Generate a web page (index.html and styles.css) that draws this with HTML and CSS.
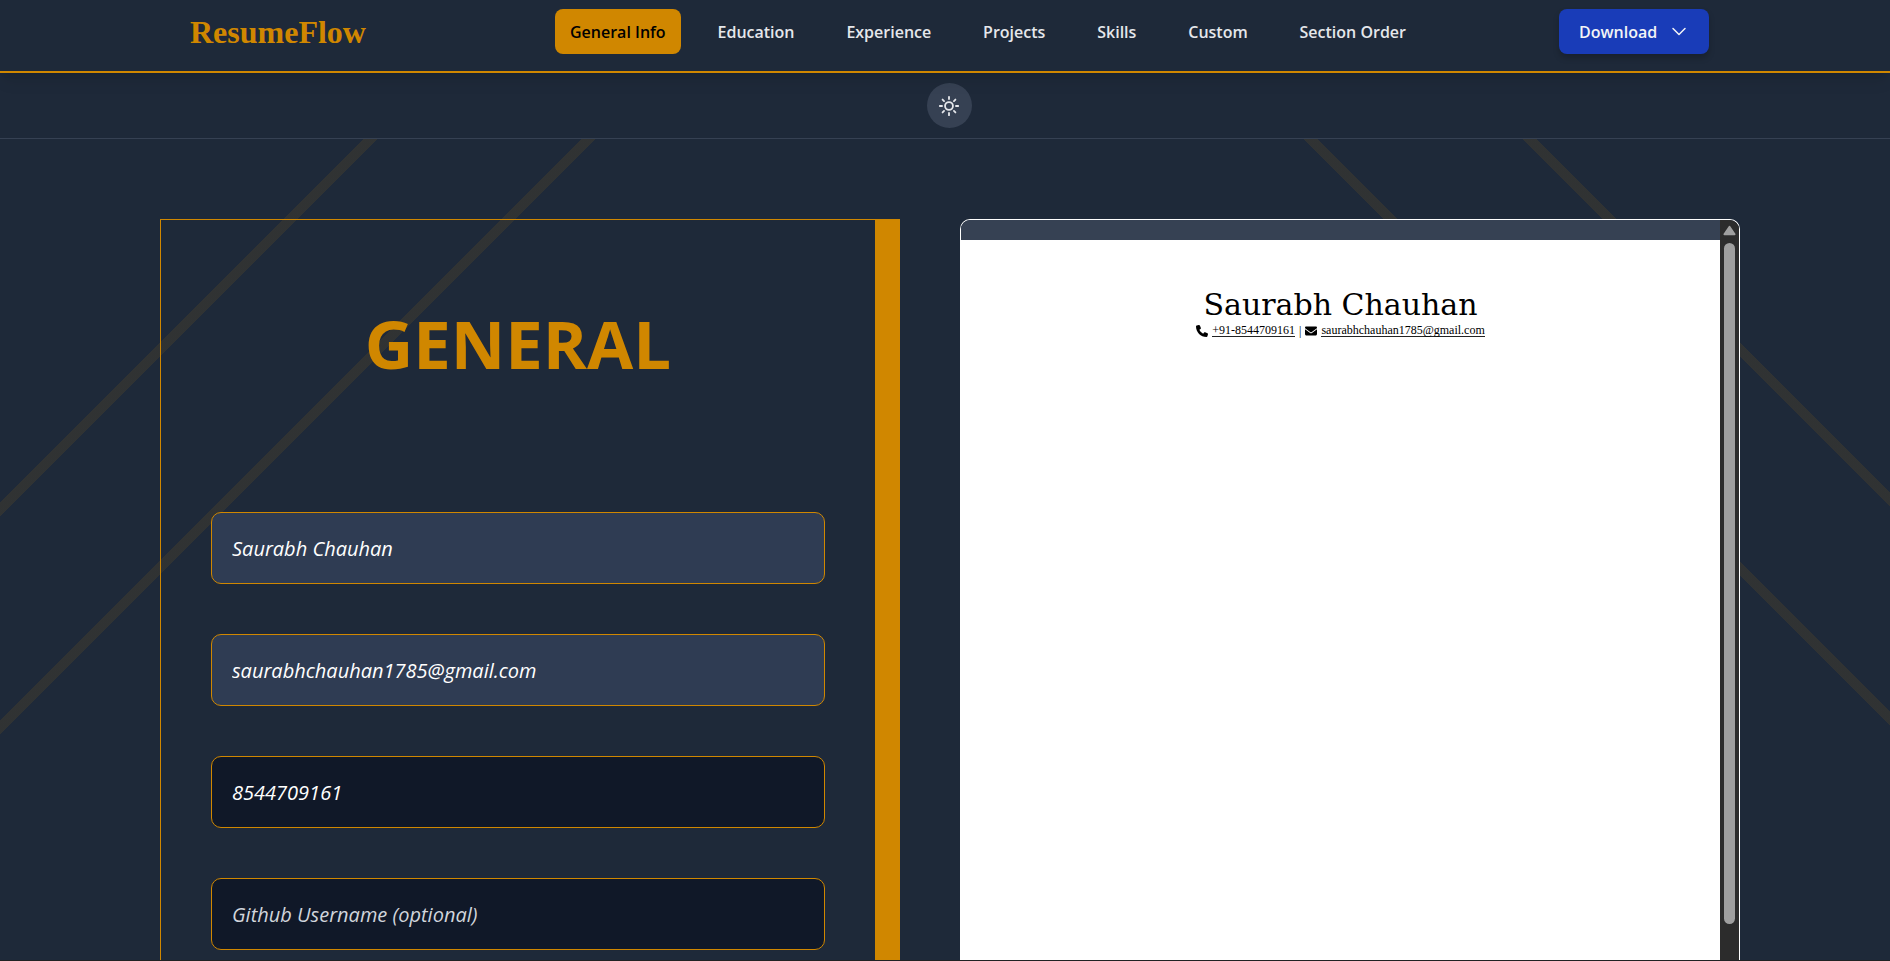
FILE: index.html
```html
<!DOCTYPE html>
<html lang="en">
<head>
<meta charset="utf-8">
<meta name="viewport" content="width=device-width, initial-scale=1">
<title>ResumeFlow</title>
<link rel="stylesheet" href="styles.css">
</head>
<body class="page">
<header class="header">
  <a class="logo" href="#">ResumeFlow</a>
  <nav class="nav">
    <a class="nav-link active" href="#general">General Info</a>
    <a class="nav-link" href="#education">Education</a>
    <a class="nav-link" href="#experience">Experience</a>
    <a class="nav-link" href="#projects">Projects</a>
    <a class="nav-link" href="#skills">Skills</a>
    <a class="nav-link" href="#custom">Custom</a>
    <a class="nav-link" href="#order">Section Order</a>
  </nav>
  <button class="download" type="button">Download
    <svg class="chevron" viewBox="0 0 16 16" aria-hidden="true"><path d="M2 4.500l6 6 6-6" fill="none" stroke="currentColor" stroke-width="1.500" stroke-linecap="round" stroke-linejoin="round"/></svg>
  </button>
</header>
<div class="theme-bar">
  <button class="theme" type="button" aria-label="Toggle theme">
    <svg class="sun" viewBox="0 0 24 24" fill="none" stroke="currentColor" stroke-width="2" stroke-linecap="round" aria-hidden="true"><circle cx="12" cy="12" r="4.300"/><path d="M12 2v2.400M12 19.600V22M2 12h2.400M19.600 12H22M5 5l1.600 1.600M17.400 17.400L19 19M5 19l1.600-1.600M17.400 6.600L19 5"/></svg>
  </button>
</div>
<main class="main">
  <form class="form">
    <h1 class="title">GENERAL</h1>
    <input class="input filled" type="text" aria-label="Full name" value="Saurabh Chauhan">
    <input class="input filled" type="email" aria-label="Email" value="saurabhchauhan1785@gmail.com">
    <input class="input" type="tel" aria-label="Phone" value="8544709161">
    <input class="input" type="text" aria-label="Github username" placeholder="Github Username (optional)">
  </form>
  <section class="preview" aria-label="Resume preview">
    <div class="viewer">
      <article class="paper">
        <h2 class="name">Saurabh Chauhan</h2>
        <p class="contact">
          <svg class="icon" viewBox="0 0 512 512" aria-hidden="true"><path fill="currentColor" d="M164.900 24.600c-7.700-18.600-28-28.500-47.400-23.200l-88 24C12.100 30.200 0 46 0 64c0 247.400 200.600 448 448 448 18 0 33.800-12.100 38.600-29.500l24-88c5.300-19.400-4.600-39.700-23.200-47.400l-96-40c-16.300-6.800-35.200-2.100-46.300 11.600L304.700 368C234.300 334.700 177.300 277.700 144 207.300L193.300 167c13.700-11.200 18.400-30 11.600-46.300l-40-96z"/></svg>
          <a class="contact-link" href="tel:+918544709161">+91-8544709161</a>
          <span>|</span>
          <svg class="icon" viewBox="0 0 512 512" aria-hidden="true"><path fill="currentColor" d="M48 64C21.500 64 0 85.500 0 112c0 15.100 7.100 29.300 19.200 38.400l217.600 163.200c11.400 8.500 27 8.500 38.400 0l217.600-163.200c12.100-9.100 19.200-23.300 19.200-38.400 0-26.500-21.500-48-48-48H48zM0 176v208c0 35.300 28.700 64 64 64h384c35.300 0 64-28.700 64-64V176L294.400 339.200c-22.800 17.100-54 17.100-76.800 0L0 176z"/></svg>
          <a class="contact-link" href="mailto:saurabhchauhan1785@gmail.com">saurabhchauhan1785@gmail.com</a>
        </p>
      </article>
    </div>
    <div class="track" aria-hidden="true">
      <svg class="arrow" viewBox="0 0 14 11"><path d="M7 1.500L12.500 9.500H1.500z" fill="currentColor" stroke="currentColor" stroke-width="2" stroke-linejoin="round"/></svg>
      <div class="thumb"></div>
    </div>
  </section>
</main>
</body>
</html>
```
FILE: styles.css
```css
* { box-sizing: border-box; }

.page {
  margin: 0;
  height: 100vh;
  display: flex;
  flex-direction: column;
  overflow: hidden;
  background: #1e2939;
  border-bottom: 1px solid #202224;
  font-family: "Open Sans", "Noto Sans", sans-serif;
}

.header {
  position: relative;
  display: flex;
  align-items: center;
  padding: 9px 181px 17px 190px;
  border-bottom: 2px solid #d08700;
  box-shadow: 0 10px 15px -3px rgba(0, 0, 0, 0.1), 0 4px 6px -4px rgba(0, 0, 0, 0.1);
}

.logo {
  flex: 0 0 365px;
  color: #d08700;
  font: bold 32px/36px "Liberation Serif", serif;
  text-decoration: none;
}

.nav {
  flex: 1;
  display: flex;
  justify-content: space-between;
  margin-right: 138px;
}

.nav-link {
  padding: 2px 15px 0;
  border-radius: 8px;
  color: #e5e7eb;
  font-size: 16px;
  font-weight: 600;
  line-height: 43px;
  text-decoration: none;
  white-space: nowrap;
}

.nav-link.active {
  background: #d08700;
  color: #000;
}

.download {
  display: flex;
  align-items: center;
  justify-content: space-between;
  width: 150px;
  height: 45px;
  padding: 0 22px 0 20px;
  border: 0;
  border-radius: 8px;
  background: #193cb8;
  box-shadow: 0 4px 6px rgba(0, 0, 0, 0.2);
  color: #f3f4f6;
  font: 600 16px "Open Sans", sans-serif;
}

.chevron { width: 16px; height: 16px; }

.theme-bar {
  display: flex;
  justify-content: center;
  padding: 10px 0 10px 8px;
  border-bottom: 1px solid #364153;
}

.theme {
  display: grid;
  place-items: center;
  width: 45px;
  height: 45px;
  padding: 0;
  border: 0;
  border-radius: 50%;
  background: #364153;
  color: #e5e7eb;
}

.sun { width: 22px; height: 22px; }

.main {
  flex: 1;
  min-height: 0;
  overflow: hidden;
  display: grid;
  grid-template-columns: 740fr 780fr;
  grid-template-rows: minmax(0, 1fr);
  gap: 60px;
  padding: 80px 150px 0 160px;
  background:
    linear-gradient(135deg, transparent 257px, rgba(208, 135, 0, 0.1) 257px 267px, transparent 267px 411px, rgba(208, 135, 0, 0.1) 411px 421px, transparent 421px),
    linear-gradient(225deg, transparent 250px, rgba(208, 135, 0, 0.1) 250px 260px, transparent 260px 405px, rgba(208, 135, 0, 0.1) 405px 415px, transparent 415px);
}

.form {
  display: flex;
  flex-direction: column;
  gap: 50px;
  padding: 78px 50px 0;
  border: solid #d08700;
  border-width: 1px 25px 0 1px;
}

.title {
  margin: 0 0 74px;
  color: #d08700;
  font-size: 67px;
  line-height: 90px;
  text-align: center;
}

.input {
  flex: none;
  width: 100%;
  height: 72px;
  padding: 0 20px;
  border: 1px solid #d08700;
  border-radius: 10px;
  background: #101828;
  color: #fff;
  font: italic 20px "Open Sans", sans-serif;
}

.input.filled { background: #2f3c53; }

.input::placeholder { color: #d1d5dc; opacity: 1; }

.preview {
  display: flex;
  overflow: hidden;
  border: 1px solid #fff;
  border-bottom: 0;
  border-radius: 10px 10px 0 0;
}

.viewer {
  flex: 1;
  display: flex;
  padding-top: 20px;
  background: #364153;
}

.paper {
  flex: 1;
  padding-top: 46px;
  background: #fff;
  color: #000;
  text-align: center;
}

.name {
  margin: 0;
  font-family: "DejaVu Serif", serif;
  font-size: 30px;
  font-weight: 400;
  line-height: 38px;
}

.contact {
  display: flex;
  justify-content: center;
  align-items: center;
  gap: 4px;
  margin: 0;
  font-family: "Liberation Serif", serif;
  font-size: 12px;
  line-height: 12px;
}

.contact-link {
  border-bottom: 1px solid #222;
  color: #000;
  text-decoration: none;
}

.icon { width: 12px; height: 12px; }

.track {
  display: flex;
  flex-direction: column;
  align-items: center;
  gap: 7px;
  width: 19px;
  padding: 5px 0 36px;
  background: #2c2c2c;
  color: #9f9f9f;
}

.arrow { width: 13px; height: 11px; }

.thumb {
  flex: 1;
  width: 11px;
  border-radius: 6px;
  background: #9f9f9f;
}
```
